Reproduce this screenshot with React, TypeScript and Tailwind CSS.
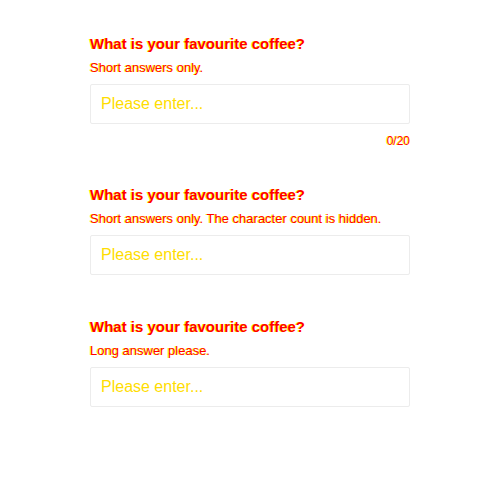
import React from 'react';

const Question = ({ hint, counter }: { hint: string; counter?: boolean }) => {
  return (
    <div className="flex flex-col">
      <h3 className="text-[15px] leading-[20px] font-bold text-[#ff0000] [text-shadow:-1px_0_0_#ffff00]">
        What is your favourite coffee?
      </h3>
      <p className="mt-[6px] text-[13px] leading-[16px] text-[#ff0000] [text-shadow:-1px_0_0_#ffff00]">{hint}</p>
      <input
        className="mt-[8px] h-[40px] w-full rounded-[2px] border border-[#ececec] px-[10px] text-[16px] outline-none placeholder:text-[#ffdd00]"
        placeholder="Please enter..."
      />
      {counter && (
        <div className="mt-[9px] text-right text-[12px] leading-[16px] text-[#ff0000] [text-shadow:-1px_0_0_#ffff00]">
          0/20
        </div>
      )}
    </div>
  );
};

const App = () => {
  return (
    <div className="min-h-screen bg-white" style={{ fontFamily: '"Liberation Sans", Arial, sans-serif' }}>
      <div className="mx-auto w-[320px] pt-[34px]">
        <Question hint="Short answers only." counter />
        <div className="mt-[36px]">
          <Question hint="Short answers only. The character count is hidden." />
        </div>
        <div className="mt-[42px]">
          <Question hint="Long answer please." />
        </div>
      </div>
    </div>
  );
};

export default App;
